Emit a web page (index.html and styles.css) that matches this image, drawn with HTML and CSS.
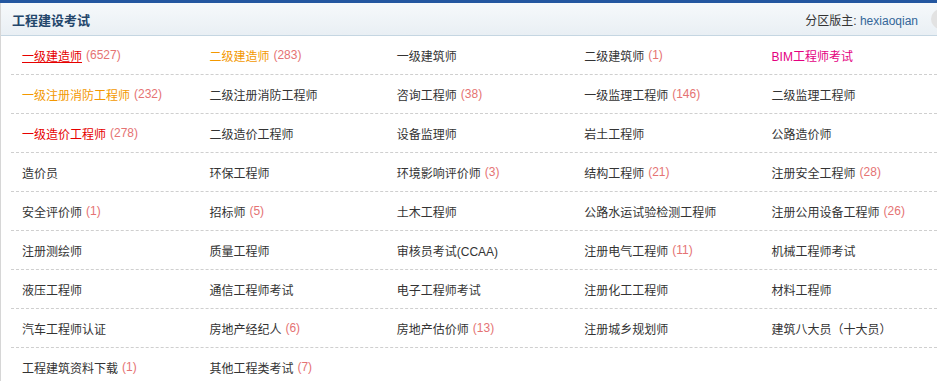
FILE: index.html
```html
<!DOCTYPE html>
<html>
<head>
    <meta charset="utf-8">
    <title>工程建设考试</title>
    <link rel="stylesheet" href="styles.css">
</head>
<body>
    <div class="top-strip"></div>
    <div class="board">
        <div class="board-head">
            <h2>工程建设考试</h2>
            <div class="moderator">分区版主: <a href="#">hexiaoqian</a></div>
            <span class="head-knob"></span>
        </div>

        <div class="forum-row">
            <div class="cell"><a class="red underline" href="#">一级建造师</a> <span class="num">(6527)</span></div>
            <div class="cell"><a class="orange" href="#">二级建造师</a> <span class="num">(283)</span></div>
            <div class="cell"><a href="#">一级建筑师</a></div>
            <div class="cell"><a href="#">二级建筑师</a> <span class="num">(1)</span></div>
            <div class="cell"><a class="pink" href="#">BIM工程师考试</a></div>
        </div>
        <div class="forum-row">
            <div class="cell"><a class="orange" href="#">一级注册消防工程师</a> <span class="num">(232)</span></div>
            <div class="cell"><a href="#">二级注册消防工程师</a></div>
            <div class="cell"><a href="#">咨询工程师</a> <span class="num">(38)</span></div>
            <div class="cell"><a href="#">一级监理工程师</a> <span class="num">(146)</span></div>
            <div class="cell"><a href="#">二级监理工程师</a></div>
        </div>
        <div class="forum-row">
            <div class="cell"><a class="red" href="#">一级造价工程师</a> <span class="num">(278)</span></div>
            <div class="cell"><a href="#">二级造价工程师</a></div>
            <div class="cell"><a href="#">设备监理师</a></div>
            <div class="cell"><a href="#">岩土工程师</a></div>
            <div class="cell"><a href="#">公路造价师</a></div>
        </div>
        <div class="forum-row">
            <div class="cell"><a href="#">造价员</a></div>
            <div class="cell"><a href="#">环保工程师</a></div>
            <div class="cell"><a href="#">环境影响评价师</a> <span class="num">(3)</span></div>
            <div class="cell"><a href="#">结构工程师</a> <span class="num">(21)</span></div>
            <div class="cell"><a href="#">注册安全工程师</a> <span class="num">(28)</span></div>
        </div>
        <div class="forum-row">
            <div class="cell"><a href="#">安全评价师</a> <span class="num">(1)</span></div>
            <div class="cell"><a href="#">招标师</a> <span class="num">(5)</span></div>
            <div class="cell"><a href="#">土木工程师</a></div>
            <div class="cell"><a href="#">公路水运试验检测工程师</a></div>
            <div class="cell"><a href="#">注册公用设备工程师</a> <span class="num">(26)</span></div>
        </div>
        <div class="forum-row">
            <div class="cell"><a href="#">注册测绘师</a></div>
            <div class="cell"><a href="#">质量工程师</a></div>
            <div class="cell"><a href="#">审核员考试(CCAA)</a></div>
            <div class="cell"><a href="#">注册电气工程师</a> <span class="num">(11)</span></div>
            <div class="cell"><a href="#">机械工程师考试</a></div>
        </div>
        <div class="forum-row">
            <div class="cell"><a href="#">液压工程师</a></div>
            <div class="cell"><a href="#">通信工程师考试</a></div>
            <div class="cell"><a href="#">电子工程师考试</a></div>
            <div class="cell"><a href="#">注册化工工程师</a></div>
            <div class="cell"><a href="#">材料工程师</a></div>
        </div>
        <div class="forum-row">
            <div class="cell"><a href="#">汽车工程师认证</a></div>
            <div class="cell"><a href="#">房地产经纪人</a> <span class="num">(6)</span></div>
            <div class="cell"><a href="#">房地产估价师</a> <span class="num">(13)</span></div>
            <div class="cell"><a href="#">注册城乡规划师</a></div>
            <div class="cell"><a href="#">建筑八大员（十大员）</a></div>
        </div>
        <div class="forum-row last">
            <div class="cell"><a href="#">工程建筑资料下载</a> <span class="num">(1)</span></div>
            <div class="cell"><a href="#">其他工程类考试</a> <span class="num">(7)</span></div>
            <div class="cell"></div>
            <div class="cell"></div>
            <div class="cell"></div>
        </div>
    </div>
</body>
</html>
```

FILE: styles.css
```css
body {
    font-family: "Liberation Sans", "Noto Sans CJK SC", sans-serif;
    font-size: 12px;
    color: #333;
    margin: 0;
    padding: 0;
    overflow: hidden;
    background: #fff;
}
a {
    color: #333;
    text-decoration: none;
}
.top-strip {
    height: 3px;
    background: #2457a0;
}
.board {
    border-left: 1px solid #d6d6d6;
}
.board-head {
    position: relative;
    height: 32px;
    display: flex;
    align-items: center;
    justify-content: space-between;
    padding: 0 19px 0 11px;
    background: linear-gradient(#f6f9fb, #e9eff4);
    border-bottom: 1px solid #c5d6e2;
}
.board-head h2 {
    margin: 0;
    font-size: 13px;
    font-weight: bold;
    color: #24466b;
}
.moderator {
    color: #333;
}
.moderator a {
    color: #336699;
}
.head-knob {
    position: absolute;
    right: -14px;
    top: 6px;
    width: 20px;
    height: 20px;
    border-radius: 50%;
    background: #e2e2e2;
}
.forum-row {
    display: grid;
    grid-template-columns: repeat(4, 187.4px) 1fr;
    margin-left: 10px;
    padding-left: 11px;
    height: 38px;
    border-bottom: 1px dashed #cfcfcf;
}
.forum-row.last {
    border-bottom: none;
}
.cell {
    display: flex;
    align-items: center;
    white-space: nowrap;
}
.cell .num {
    color: #e57373;
    margin-left: 4px;
}
.red {
    color: #e60000;
}
.underline {
    text-decoration: underline;
}
.orange {
    color: #f39800;
}
.pink {
    color: #e4007f;
}
```
